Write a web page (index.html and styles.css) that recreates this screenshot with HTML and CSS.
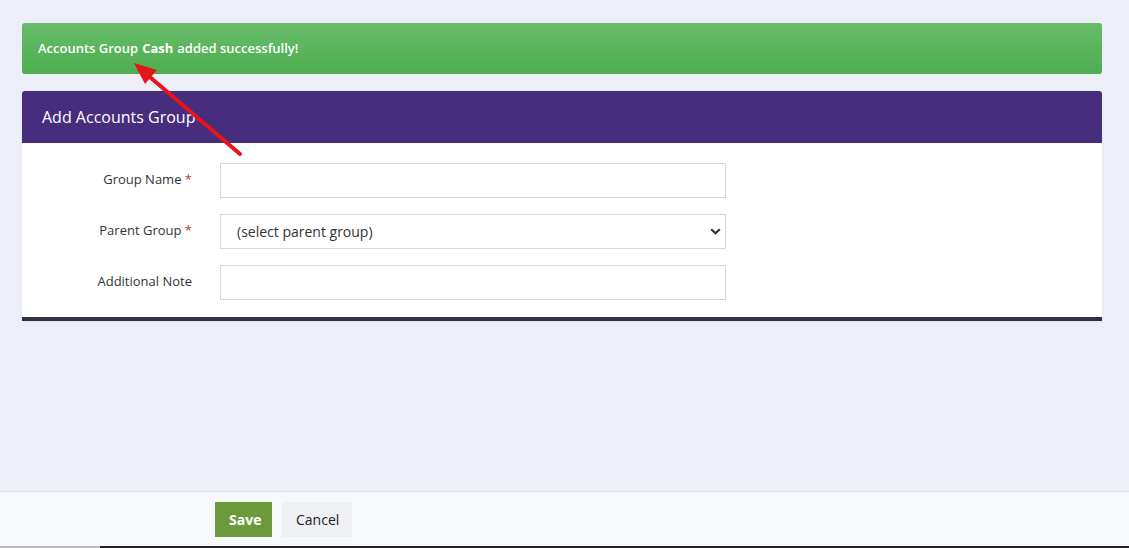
FILE: index.html
```html
<!DOCTYPE html>
<html>

<head>
	<meta charset="utf-8">
	<title>Add Accounts Group</title>
	<meta name="viewport" content="width=device-width, initial-scale=1">
	<link rel="stylesheet" href="styles.css">
</head>

<body>
	<div class='page'>
		<main class='content'>
			<div class='alert alert--success'>
				Accounts Group <b>Cash</b> added successfully!
			</div>

			<section class='card'>
				<div class='card__header'>
					<h2>Add Accounts Group</h2>
				</div>
				<form class='card__body'>
					<div class='form-row'>
						<label for='group-name'>Group Name <span class='req'>*</span></label>
						<input id='group-name' type='text'>
					</div>
					<div class='form-row'>
						<label for='parent-group'>Parent Group <span class='req'>*</span></label>
						<div class='select-wrap'>
							<select id='parent-group'>
								<option>(select parent group)</option>
							</select>
							<svg class='select-wrap__chevron' width='11' height='7' viewBox='0 0 11 7'>
								<path d='M1.2 1.2 L5.5 5.3 L9.8 1.2' fill='none' stroke='#333' stroke-width='2.2' />
							</svg>
						</div>
					</div>
					<div class='form-row'>
						<label for='note'>Additional Note</label>
						<input id='note' type='text'>
					</div>
				</form>
			</section>
		</main>

		<footer class='actions'>
			<button class='btn btn--save' type='button'>Save</button>
			<button class='btn btn--cancel' type='button'>Cancel</button>
		</footer>
		<div class='taskbar'></div>
	</div>

	<!-- annotation arrow drawn over the screenshot -->
	<svg class='annotation' width='1129' height='548' viewBox='0 0 1129 548'>
		<line x1='240' y1='154' x2='151' y2='78' stroke='#e8141b' stroke-width='4' stroke-linecap='round' />
		<polygon points='134,63 157,70 145,84' fill='#e8141b' />
	</svg>
</body>

</html>
```

FILE: styles.css
```css
* {
	box-sizing: border-box;
}

html,
body {
	margin: 0;
	padding: 0;
}

body {
	font-family: 'Open Sans', 'Liberation Sans', sans-serif;
	background-color: #eceff7;
	color: #333;
	position: relative;
}

.page {
	height: 100vh;
	display: flex;
	flex-direction: column;
}

.content {
	flex: 1;
	padding: 23px 27px 0 22px;
}

.alert {
	height: 51px;
	border-radius: 3px;
	padding: 0 16px 1px;
	display: flex;
	align-items: center;
	gap: 4px;
	font-size: 13px;
	font-weight: 600;
	color: #fff;
}

.alert b {
	font-weight: 700;
}

.alert--success {
	background: linear-gradient(to bottom, #68bc6b, #4dad4f);
}

.card {
	margin-top: 17px;
	background-color: #fff;
	border-bottom: 4px solid #2e3240;
	border-radius: 3px 3px 0 0;
	box-shadow: 0 1px 3px rgba(0, 0, 0, 0.05);
}

.card__header {
	height: 52px;
	background-color: #472d7e;
	border-radius: 3px 3px 0 0;
	padding: 0 20px;
	display: flex;
	align-items: center;
}

.card__header h2 {
	margin: 0;
	font-size: 16px;
	font-weight: 400;
	color: #fff;
}

.card__body {
	padding: 20px 0 17px;
	display: flex;
	flex-direction: column;
	gap: 16px;
}

.form-row {
	display: flex;
	align-items: center;
}

.form-row label {
	width: 170px;
	text-align: right;
	font-size: 13px;
	color: #333;
	padding-bottom: 3px;
}

.req {
	color: #c0392b;
}

.form-row input,
.form-row select {
	width: 506px;
	height: 35px;
	margin-left: 28px;
	border: 1px solid #d5d7dc;
	border-radius: 0;
	background-color: #fff;
	font-family: inherit;
	font-size: 14px;
	color: #333;
	outline: none;
}

.select-wrap {
	position: relative;
	display: flex;
}

.form-row select {
	-webkit-appearance: none;
	appearance: none;
	padding: 0 0 0 16px;
}

.select-wrap__chevron {
	position: absolute;
	right: 5px;
	top: 14px;
}

.actions {
	height: 55px;
	background-color: #f7f8fc;
	border-top: 1px solid #dde0e8;
	padding-left: 215px;
	display: flex;
	align-items: center;
	gap: 10px;
}

.btn {
	height: 35px;
	border: none;
	border-radius: 0;
	font-family: inherit;
	font-size: 14px;
	padding: 0 14px;
	cursor: pointer;
}

.btn--save {
	width: 57px;
	background-color: #6a9a3b;
	color: #fff;
	font-weight: 700;
}

.btn--cancel {
	width: 70px;
	background-color: #eef0f4;
	color: #222;
}

.taskbar {
	height: 2px;
	background: linear-gradient(to right, #b8b8bc 100px, #221f22 100px);
}

.annotation {
	position: absolute;
	top: 0;
	left: 0;
	pointer-events: none;
}
```
